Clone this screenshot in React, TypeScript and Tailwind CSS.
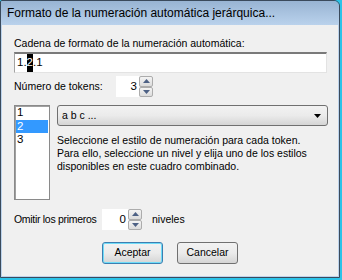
import React from "react";

const ui = { fontFamily: '"Liberation Sans", Arial, sans-serif' };

function Spin({ value, w }: { value: string; w: string }) {
  return (
    <div className="flex h-[21px]">
      <div className={`${w} h-full bg-white flex items-center justify-end pr-[2px] text-[11.5px] leading-none`}>
        {value}
      </div>
      <div className="flex flex-col w-[14px] h-full">
        <div className="flex-1 flex items-center justify-center border border-[#acacac] rounded-[2px] bg-gradient-to-b from-[#f4f4f4] to-[#dcdcdc]">
          <svg width="7" height="4" viewBox="0 0 7 4">
            <path d="M0 4 L3.5 0 L7 4 Z" fill="#4d6185" />
          </svg>
        </div>
        <div className="flex-1 flex items-center justify-center border border-[#acacac] rounded-[2px] bg-gradient-to-b from-[#f4f4f4] to-[#dcdcdc]">
          <svg width="7" height="4" viewBox="0 0 7 4">
            <path d="M0 0 L7 0 L3.5 4 Z" fill="#4d6185" />
          </svg>
        </div>
      </div>
    </div>
  );
}

export default function App() {
  return (
    <div className="w-[342px] h-[280px] bg-[#2bc3e8] pr-[2px] pb-[2px]" style={ui}>
      <div className="w-full h-full flex flex-col border border-[#3a4a5c] rounded-tr-[6px] rounded-tl-[2px] overflow-hidden text-black">
        <div className="h-[24px] shrink-0 bg-gradient-to-b from-[#98b4d3] to-[#bad2ec] flex items-center pl-[6px] text-[12px] whitespace-nowrap">
          Formato de la numeración automática jerárquica...
        </div>
        <div className="flex-1 bg-[#f0f0f0] border-l border-r border-b border-[#bcd3ec] flex flex-col pl-[12px] pr-[10px] text-[10.5px] whitespace-nowrap">
          <div className="mt-[12px] h-[13px] leading-[13px]">Cadena de formato de la numeración automática:</div>
          <div className="mt-[2px] h-[21px] w-[313px] bg-white border-t-2 border-l border-b border-r border-t-[#7a7a7a] border-l-[#a3a3a3] border-b-[#e3e3e3] border-r-[#e3e3e3] flex items-center pl-[2px] text-[11.5px]">
            <span>1.</span>
            <span className="bg-black text-white">2</span>
            <span>.1</span>
          </div>
          <div className="mt-[3px] h-[21px] flex items-center">
            <div className="w-[102px]">Número de tokens:</div>
            <Spin value="3" w="w-[23px]" />
          </div>
          <div className="mt-[8px] flex gap-[7px]">
            <div className="w-[36px] h-[95px] bg-white border border-[#8a8a8a] shadow-[inset_1px_1px_0_#a0a0a0] p-[1px] pt-0 text-[11.5px] leading-[13.5px]">
              <div className="pl-[1px]">1</div>
              <div className="pl-[1px] bg-[#3399ff] text-white">2</div>
              <div className="pl-[1px]">3</div>
            </div>
            <div className="flex flex-col">
              <div className="w-[271px] h-[21px] rounded-[3px] border border-[#707070] bg-gradient-to-b from-[#f2f2f2] via-[#ebebeb] to-[#d5d5d5] flex items-center justify-between pl-[4px] pr-[6px]">
                <span>a b c ...</span>
                <svg width="7" height="4" viewBox="0 0 7 4">
                  <path d="M0 0 L7 0 L3.5 4 Z" fill="#000" />
                </svg>
              </div>
              <div className="mt-[8px] leading-[13px]">
                Seleccione el estilo de numeración para cada token.
                <br />
                Para ello, seleccione un nivel y elija uno de los estilos
                <br />
                disponibles en este cuadro combinado.
              </div>
            </div>
          </div>
          <div className="mt-[9px] h-[21px] flex items-center">
            <div className="w-[88px] tracking-[-0.3px]">Omitir los primeros</div>
            <Spin value="0" w="w-[26px]" />
            <div className="ml-[10px]">niveles</div>
          </div>
          <div className="mt-[12px] flex justify-center gap-[14px] pr-[2px]">
            <div className="w-[61px] h-[22px] rounded-[3px] border border-[#3c7fb1] shadow-[inset_0_0_0_1px_#6fdcf8] bg-gradient-to-b from-[#f2f2f2] via-[#ebebeb] to-[#d5d5d5] flex items-center justify-center">
              Aceptar
            </div>
            <div className="w-[61px] h-[22px] rounded-[3px] border border-[#707070] bg-gradient-to-b from-[#f2f2f2] via-[#ebebeb] to-[#d5d5d5] flex items-center justify-center">
              Cancelar
            </div>
          </div>
        </div>
      </div>
    </div>
  );
}
